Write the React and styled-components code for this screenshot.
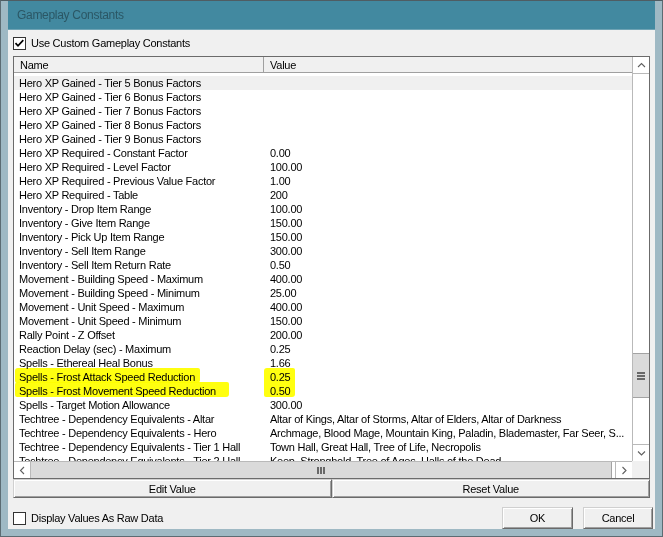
import React from 'react';
import styled, { createGlobalStyle } from 'styled-components';

const uiFont = '"Liberation Sans", Arial, sans-serif';
const dialogGray = '#f0f0f0';
const scrollLine = '#b9b9b9';

const GlobalStyle = createGlobalStyle`
  html, body {
    margin: 0;
    padding: 0;
    background: #9fb9c4;
  }
  * {
    box-sizing: border-box;
  }
`;

const Frame = styled.div`
  width: 663px;
  height: 537px;
  display: flex;
  flex-direction: column;
  background: #9fb9c4;
  border: 1px solid #5c6c73;
  border-top-color: #4f5d63;
  padding: 0 7px 7px;
  font-family: ${uiFont};
  font-size: 11px;
  letter-spacing: -0.25px;
  color: #000;
`;

const TitleBar = styled.div`
  flex: 0 0 29px;
  display: flex;
  align-items: center;
  padding: 0 0 1px 9px;
  background: #4289a0;
  border-bottom: 1px solid #6fa3b4;
  font-size: 12px;
  letter-spacing: -0.3px;
  color: #2b5765;
`;

const Client = styled.div`
  flex: 1 1 auto;
  display: flex;
  flex-direction: column;
  background: ${dialogGray};
  padding: 7px 5px 0;
`;

const CheckRow = styled.label`
  display: flex;
  align-items: center;
  gap: 5px;
  height: 13px;
  line-height: 13px;
  white-space: nowrap;
`;

const Box = styled.span`
  flex: 0 0 13px;
  width: 13px;
  height: 13px;
  border: 1px solid #333;
  background: #fff;
  display: flex;
  align-items: center;
  justify-content: center;
`;

const CheckBox = ({ checked }) => (
  <Box>
    {checked && (
      <svg width="11" height="11" viewBox="0 0 11 11">
        <polyline points="1.5,5.2 4,7.8 9.3,2.2" fill="none" stroke="#000" strokeWidth="1.7" />
      </svg>
    )}
  </Box>
);

const ListBox = styled.div`
  margin-top: 6px;
  height: 423px;
  border: 1px solid #6b6b6b;
  background: #fff;
  display: grid;
  grid-template-columns: 1fr 17px;
  grid-template-rows: 1fr 17px;
`;

const Main = styled.div`
  position: relative;
  overflow: hidden;
`;

const Header = styled.div`
  display: grid;
  grid-template-columns: 250px 1fr;
  height: 16px;
  background: ${dialogGray};
  border-bottom: 1px solid #a0a0a0;
`;

const HeaderCell = styled.div`
  line-height: 15px;
  padding: 1px 0 0 6px;
  border-right: ${props => (props.$first ? '1px solid #a0a0a0' : 'none')};
`;

const Rows = styled.div`
  padding-top: 3px;
`;

const Row = styled.div`
  display: grid;
  grid-template-columns: 250px 1fr;
  height: 14px;
  line-height: 14px;
  white-space: nowrap;
  background: ${props => (props.$selected ? dialogGray : 'transparent')};
`;

const Cell = styled.div`
  overflow: hidden;
  padding-left: ${props => (props.$value ? '6px' : '5px')};
`;

const Mark = styled.div`
  position: absolute;
  background: #ffff10;
  mix-blend-mode: multiply;
  border-radius: 3px 2px 3px 2px;
  filter: blur(0.6px);
  pointer-events: none;
`;

const VScroll = styled.div`
  grid-row: 1;
  grid-column: 2;
  display: flex;
  flex-direction: column;
  border-left: 1px solid ${scrollLine};
  background: #fff;
`;

const HScroll = styled.div`
  grid-row: 2;
  grid-column: 1;
  display: flex;
  border-top: 1px solid ${scrollLine};
  background: #fff;
`;

const Corner = styled.div`
  grid-row: 2;
  grid-column: 2;
  background: ${dialogGray};
`;

const ArrowButton = styled.div`
  flex: 0 0 17px;
  display: flex;
  align-items: center;
  justify-content: center;
  background: #fff;
  border-color: ${scrollLine};
  border-style: solid;
  border-width: 0;
  border-bottom-width: ${props => (props.$side === 'top' ? '1px' : '0')};
  border-top-width: ${props => (props.$side === 'bottom' ? '1px' : '0')};
  border-right-width: ${props => (props.$side === 'left' ? '1px' : '0')};
  border-left-width: ${props => (props.$side === 'right' ? '1px' : '0')};
`;

const Track = styled.div`
  flex: 1 1 auto;
  display: flex;
  flex-direction: ${props => (props.$horizontal ? 'row' : 'column')};
`;

const VThumb = styled.div`
  margin-top: ${props => props.$offset}px;
  height: ${props => props.$size}px;
  background: #dadada;
  border-top: 1px solid #a3a3a3;
  border-bottom: 1px solid #a3a3a3;
  display: flex;
  align-items: center;
  justify-content: center;
`;

const HThumb = styled.div`
  flex: 1 1 auto;
  margin-right: 3px;
  background: #dadada;
  border-right: 1px solid #a3a3a3;
  display: flex;
  align-items: center;
  justify-content: center;
`;

const Chevron = ({ dir }) => {
  const points = {
    up: '1,5 4.5,1.5 8,5',
    down: '1,1.5 4.5,5 8,1.5',
    left: '5,1 1.5,4.5 5,8',
    right: '1.5,1 5,4.5 1.5,8'
  }[dir];
  const horizontal = dir === 'left' || dir === 'right';
  return (
    <svg width={horizontal ? 7 : 9} height={horizontal ? 9 : 7} viewBox={horizontal ? '0 0 7 9' : '0 0 9 7'}>
      <polyline points={points} fill="none" stroke="#606060" strokeWidth="1.1" />
    </svg>
  );
};

const Grip = ({ horizontal }) =>
  horizontal ? (
    <svg width="8" height="7" viewBox="0 0 8 7">
      <rect x="0" y="0" width="2" height="7" fill="#686868" />
      <rect x="3" y="0" width="2" height="7" fill="#686868" />
      <rect x="6" y="0" width="2" height="7" fill="#686868" />
    </svg>
  ) : (
    <svg width="8" height="8" viewBox="0 0 8 8">
      <rect x="0" y="0" width="8" height="2" fill="#686868" />
      <rect x="0" y="3" width="8" height="2" fill="#686868" />
      <rect x="0" y="6" width="8" height="2" fill="#686868" />
    </svg>
  );

const ButtonRow = styled.div`
  display: flex;
  height: 19px;
`;

const Button = styled.button`
  flex: ${props => (props.$wide ? '1 1 0' : '0 0 auto')};
  width: ${props => (props.$wide ? 'auto' : props.$width + 'px')};
  height: ${props => (props.$wide ? '19px' : '22px')};
  margin: 0;
  padding: 0;
  font-family: ${uiFont};
  font-size: 11px;
  letter-spacing: -0.25px;
  color: #000;
  background: ${dialogGray};
  border: 1px solid;
  border-color: #d0d0d0 #6a6a6a #6a6a6a #d0d0d0;
  box-shadow: inset 1px 1px #fff, inset -1px -1px #a0a0a0;
  text-align: center;
`;

const BottomRow = styled.div`
  margin-top: auto;
  margin-right: -3px;
  height: 22px;
  display: flex;
  align-items: center;
  gap: 10px;
`;

const Spacer = styled.div`
  flex: 1 1 auto;
`;

const rows = [
  ['Hero XP Gained - Tier 5 Bonus Factors', ''],
  ['Hero XP Gained - Tier 6 Bonus Factors', ''],
  ['Hero XP Gained - Tier 7 Bonus Factors', ''],
  ['Hero XP Gained - Tier 8 Bonus Factors', ''],
  ['Hero XP Gained - Tier 9 Bonus Factors', ''],
  ['Hero XP Required - Constant Factor', '0.00'],
  ['Hero XP Required - Level Factor', '100.00'],
  ['Hero XP Required - Previous Value Factor', '1.00'],
  ['Hero XP Required - Table', '200'],
  ['Inventory - Drop Item Range', '100.00'],
  ['Inventory - Give Item Range', '150.00'],
  ['Inventory - Pick Up Item Range', '150.00'],
  ['Inventory - Sell Item Range', '300.00'],
  ['Inventory - Sell Item Return Rate', '0.50'],
  ['Movement - Building Speed - Maximum', '400.00'],
  ['Movement - Building Speed - Minimum', '25.00'],
  ['Movement - Unit Speed - Maximum', '400.00'],
  ['Movement - Unit Speed - Minimum', '150.00'],
  ['Rally Point - Z Offset', '200.00'],
  ['Reaction Delay (sec) - Maximum', '0.25'],
  ['Spells - Ethereal Heal Bonus', '1.66'],
  ['Spells - Frost Attack Speed Reduction', '0.25'],
  ['Spells - Frost Movement Speed Reduction', '0.50'],
  ['Spells - Target Motion Allowance', '300.00'],
  ['Techtree - Dependency Equivalents - Altar', 'Altar of Kings, Altar of Storms, Altar of Elders, Altar of Darkness'],
  ['Techtree - Dependency Equivalents - Hero', 'Archmage, Blood Mage, Mountain King, Paladin, Blademaster, Far Seer, S...'],
  ['Techtree - Dependency Equivalents - Tier 1 Hall', 'Town Hall, Great Hall, Tree of Life, Necropolis'],
  ['Techtree - Dependency Equivalents - Tier 2 Hall', 'Keep, Stronghold, Tree of Ages, Halls of the Dead']
];

// marker strokes drawn over the screenshot, in px from the list's top-left
const marks = [
  { left: 1, top: 311, width: 185, height: 15 },
  { left: 1, top: 325, width: 214, height: 15 },
  { left: 250, top: 311, width: 31, height: 29 }
];

export default function App() {
  return (
    <Frame>
      <GlobalStyle />
      <TitleBar>Gameplay Constants</TitleBar>
      <Client>
        <CheckRow>
          <CheckBox checked />
          Use Custom Gameplay Constants
        </CheckRow>
        <ListBox>
          <Main>
            <Header>
              <HeaderCell $first>Name</HeaderCell>
              <HeaderCell>Value</HeaderCell>
            </Header>
            <Rows>
              {rows.map(([name, value], i) => (
                <Row key={name} $selected={i === 0}>
                  <Cell>{name}</Cell>
                  <Cell $value>{value}</Cell>
                </Row>
              ))}
            </Rows>
            {marks.map((m, i) => (
              <Mark key={i} style={m} />
            ))}
          </Main>
          <VScroll>
            <ArrowButton $side="top">
              <Chevron dir="up" />
            </ArrowButton>
            <Track>
              <VThumb $offset={279} $size={45}>
                <Grip />
              </VThumb>
            </Track>
            <ArrowButton $side="bottom">
              <Chevron dir="down" />
            </ArrowButton>
          </VScroll>
          <HScroll>
            <ArrowButton $side="left">
              <Chevron dir="left" />
            </ArrowButton>
            <Track $horizontal>
              <HThumb>
                <Grip horizontal />
              </HThumb>
            </Track>
            <ArrowButton $side="right">
              <Chevron dir="right" />
            </ArrowButton>
          </HScroll>
          <Corner />
        </ListBox>
        <ButtonRow>
          <Button $wide>Edit Value</Button>
          <Button $wide>Reset Value</Button>
        </ButtonRow>
        <BottomRow>
          <CheckRow>
            <CheckBox />
            Display Values As Raw Data
          </CheckRow>
          <Spacer />
          <Button $width={71}>OK</Button>
          <Button $width={70}>Cancel</Button>
        </BottomRow>
      </Client>
    </Frame>
  );
}
